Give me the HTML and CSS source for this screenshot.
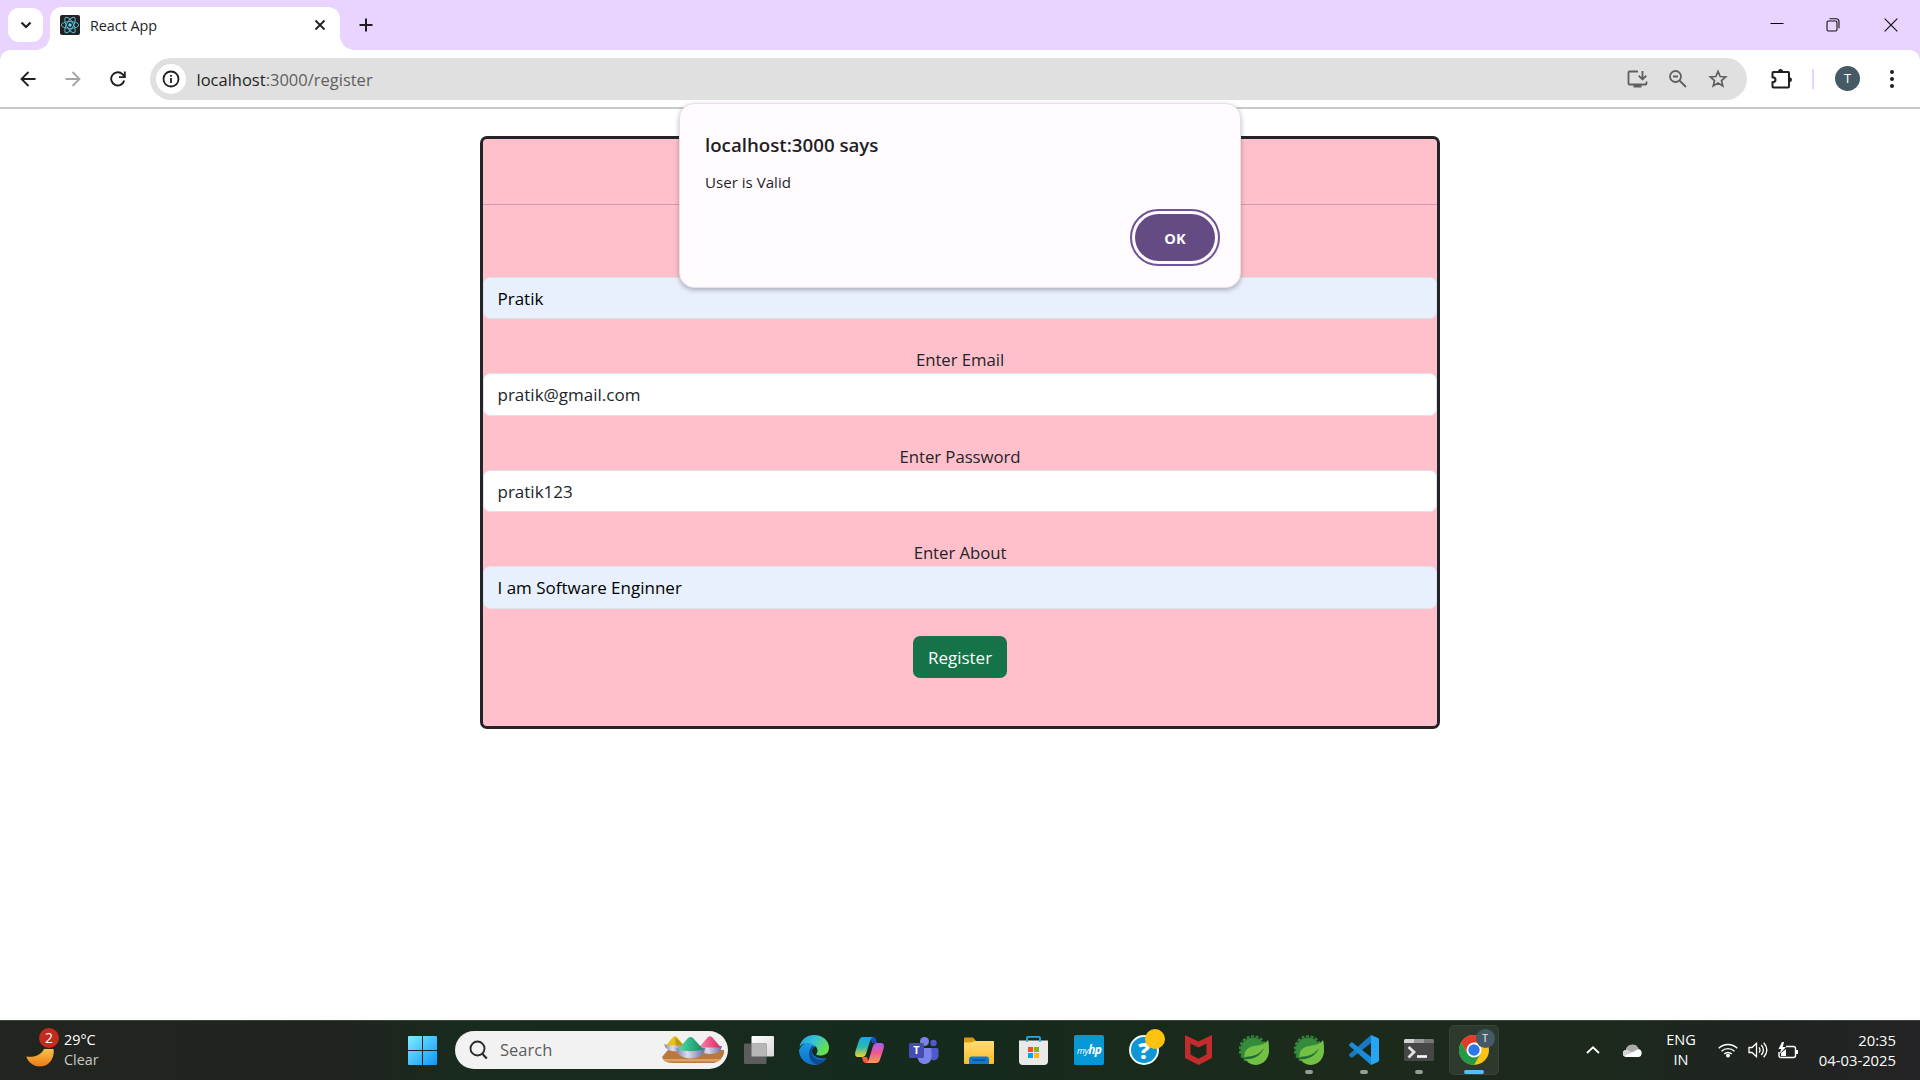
FILE: index.html
```html
<!DOCTYPE html>
<html lang="en">
<head>
<meta charset="utf-8">
<title>React App</title>
<link rel="stylesheet" href="styles.css">
</head>
<body>
<div class="screen">
  <header class="tabstrip">
    <div class="tab-search"><svg width="14" height="14" viewBox="0 0 14 14"><path d="M2.500 4.500 7 9l4.500-4.500" fill="none" stroke="#1f1f1f" stroke-width="2.200"/></svg></div>
    <div class="tab">
      <svg class="favicon" width="20" height="20" viewBox="0 0 20 20"><rect width="20" height="20" rx="2" fill="#222"/><g fill="none" stroke="#58b5cb" stroke-width="1"><ellipse cx="10" cy="10" rx="8.700" ry="3.400"/><ellipse cx="10" cy="10" rx="8.700" ry="3.400" transform="rotate(60 10 10)"/><ellipse cx="10" cy="10" rx="8.700" ry="3.400" transform="rotate(120 10 10)"/></g><circle cx="10" cy="10" r="1.700" fill="#61dafb"/></svg>
      <span class="tab-title">React App</span>
      <svg class="tab-close" width="12" height="12" viewBox="0 0 12 12"><path d="M1.500 1.500l9 9m0-9l-9 9" stroke="#1f1f1f" stroke-width="1.800"/></svg>
    </div>
    <svg class="new-tab" width="14" height="14" viewBox="0 0 14 14"><path d="M7 .5v13M.5 7h13" stroke="#1f1f1f" stroke-width="2"/></svg>
    <div class="window-controls">
      <svg width="14" height="14" viewBox="0 0 14 14"><path d="M.5 5.500h13" stroke="#000" stroke-width="1"/></svg>
      <svg width="14" height="14" viewBox="0 0 14 14"><rect x="1" y="3" width="10" height="10" rx="1.500" fill="none" stroke="#111" stroke-width="1.100"/><path d="M3.500 .8H10q3 0 3 3v6.500" fill="none" stroke="#111" stroke-width="1.100"/></svg>
      <svg width="14" height="14" viewBox="0 0 14 14"><path d="M.7 .7l12.600 12.600m0-12.600L.7 13.300" stroke="#111" stroke-width="1.200"/></svg>
    </div>
  </header>

  <div class="toolbar">
    <div class="nav-cell"><svg width="16" height="16" viewBox="0 0 16 16"><path d="M15.500 8H2M8.500 1 1.500 8l7 7" fill="none" stroke="#1f1f1f" stroke-width="1.800"/></svg></div>
    <div class="nav-cell"><svg width="16" height="16" viewBox="0 0 16 16"><path d="M.5 8H14M7.500 1l7 7-7 7" fill="none" stroke="#a5a5a5" stroke-width="1.800"/></svg></div>
    <div class="nav-cell"><svg width="16" height="16" viewBox="0 0 16 16"><path d="M14.200 9.500A6.600 6.600 0 1 1 12.600 3.300L14.300 5M14.800 .5v5.600H9" fill="none" stroke="#1f1f1f" stroke-width="1.900"/></svg></div>
    <div class="omnibox">
      <div class="site-info"><svg width="18" height="18" viewBox="0 0 18 18"><circle cx="9" cy="9" r="7.500" fill="none" stroke="#1f1f1f" stroke-width="1.800"/><path d="M9 8v5M9 5v1.800" stroke="#1f1f1f" stroke-width="1.800"/></svg></div>
      <span class="url"><b>localhost</b>:3000/register</span>
      <div class="omni-cell"><svg width="21" height="19" viewBox="0 0 21 19"><path d="M11 1.500H2.500q-1 0-1 1V13.500q0 1 1 1h16q1 0 1-1V11.500" fill="none" stroke="#5f5f5f" stroke-width="1.800"/><path d="M6.500 15h8v2.500h-8z" fill="#5f5f5f"/><path d="M15.500 1v8M11.700 5.600l3.800 3.800 3.800-3.800" fill="none" stroke="#5f5f5f" stroke-width="1.800"/></svg></div>
      <div class="omni-cell"><svg width="18" height="18" viewBox="0 0 18 18"><circle cx="6.500" cy="6.500" r="5.500" fill="none" stroke="#5f5f5f" stroke-width="1.800"/><path d="M4 6.500h5M10.500 10.500l6.500 6.500" stroke="#5f5f5f" stroke-width="1.800"/></svg></div>
      <div class="omni-cell"><svg width="20" height="20" viewBox="0 0 20 20"><path d="M10 2.400 12.200 7.500l5.500.5-4.200 3.600 1.300 5.400-4.800-2.900L5.200 17l1.300-5.400L2.300 8l5.500-.5z" fill="none" stroke="#5f5f5f" stroke-width="1.700"/></svg></div>
    </div>
    <svg class="extensions" width="22" height="22" viewBox="0 0 22 22"><path d="M3.500 4H18q1 0 1 1V18.500q0 1-1 1H3.500q-1 0-1-1v-4.300c4-.4 4-4.600 0-5V5q0-1 1-1z" fill="none" stroke="#1f1f1f" stroke-width="2"/><path d="M8 3.500a2.500 2.500 0 0 1 5 0zM19.500 9.200a2.500 2.500 0 0 1 0 5z" fill="#1f1f1f"/></svg>
    <span class="divider"></span>
    <span class="avatar">T</span>
    <svg class="menu" width="6" height="20" viewBox="0 0 6 20"><circle cx="3" cy="3" r="2" fill="#1f1f1f"/><circle cx="3" cy="10" r="2" fill="#1f1f1f"/><circle cx="3" cy="17" r="2" fill="#1f1f1f"/></svg>
  </div>

  <main class="page">
    <form class="card">
      <div class="card-head"></div>
      <div class="card-body">
        <div class="field"><div class="control autofill">Pratik</div></div>
        <div class="field"><label>Enter Email</label><div class="control">pratik@gmail.com</div></div>
        <div class="field"><label>Enter Password</label><div class="control">pratik123</div></div>
        <div class="field"><label>Enter About</label><div class="control autofill">I am Software Enginner</div></div>
        <button class="register" type="button">Register</button>
      </div>
    </form>
  </main>

  <div class="dialog">
    <h1>localhost:3000 says</h1>
    <p>User is Valid</p>
    <button class="ok" type="button">OK</button>
  </div>

  <footer class="taskbar">
    <div class="weather">
      <div class="moon">
        <svg width="30" height="20" viewBox="0 0 30 20"><defs><linearGradient id="moon" x1="0" y1="0" x2="0" y2="1"><stop offset="0" stop-color="#f6c445"/><stop offset="1" stop-color="#ee7a1a"/></linearGradient></defs><path d="M.3 7.500C9 9 16 5 18 0h9.500C29 8 24 17.500 14 17.500 7 17.500 2 13 .3 7.500z" fill="url(#moon)"/></svg>
        <span class="badge">2</span>
      </div>
      <div class="weather-text"><div>29°C</div><div class="dim">Clear</div></div>
    </div>
    <svg class="start" width="29" height="29" viewBox="0 0 29 29"><defs><linearGradient id="win" gradientUnits="userSpaceOnUse" x1="0" y1="0" x2="29" y2="29"><stop offset="0" stop-color="#7deeff"/><stop offset="1" stop-color="#0f95fb"/></linearGradient></defs><path d="M1 0h13v14H0V1q0-1 1-1zM15 0h13q1 0 1 1v13H15zM0 15h14v14H1q-1 0-1-1zM15 15h14v13q0 1-1 1H15z" fill="url(#win)"/></svg>
    <div class="search">
      <svg class="lens" width="19" height="20" viewBox="0 0 19 20"><circle cx="8.500" cy="8.500" r="7" fill="none" stroke="#2b2b2b" stroke-width="1.900"/><path d="M13.300 13.700l4.500 4.800" stroke="#2b2b2b" stroke-width="2.200"/></svg>
      <span>Search</span>
      <svg class="holi" width="64" height="30" viewBox="0 0 64 30"><defs><linearGradient id="bowl" x1="0" y1="0" x2="1" y2="0"><stop offset="0" stop-color="#8383b4"/><stop offset=".4" stop-color="#dcdcee"/><stop offset="1" stop-color="#6b6ba3"/></linearGradient><linearGradient id="grn" x1="0" y1="0" x2="1" y2="0"><stop offset="0" stop-color="#4fdda8"/><stop offset="1" stop-color="#138963"/></linearGradient><linearGradient id="pnk" x1="0" y1="0" x2="1" y2="0"><stop offset="0" stop-color="#ff83ac"/><stop offset="1" stop-color="#d8275f"/></linearGradient></defs>
        <path d="M7 15h56c1 6-4 11-10 13H12Q3 28 1 22z" fill="#b9793e"/><path d="M2 24h59l-4 2.500H4z" fill="#e0a263"/>
        <path d="M3 9.500h21q-1 7-9 7-10 0-12-7z" fill="url(#bowl)"/><path d="M5 10.500 12 2q2-1.500 4 0l7 8.500z" fill="#e5c11c"/><path d="M14 2l9 8.500h-8z" fill="#bb9710"/>
        <path d="M37 11h24q-1 8-12 8-10 0-12-8z" fill="url(#bowl)"/><path d="M38 12.500 47 2q2-1.500 4 0l9 10.500z" fill="url(#pnk)"/>
        <path d="M15 13h29q-1 10-14 10.500Q17 24 15 13z" fill="url(#bowl)"/><path d="M17 14.500 27 3q3-2 5 0l10.500 11.500Q30 18 17 14.500z" fill="url(#grn)"/></svg>
    </div>
    <nav class="apps">
      <div class="app"><svg width="30" height="28" viewBox="0 0 30 28"><defs><linearGradient id="tv" x1="0" y1="0" x2="1" y2="1"><stop offset="0" stop-color="#fff"/><stop offset="1" stop-color="#d8d8d8"/></linearGradient></defs><rect x="7.500" y="0" width="22.500" height="20.500" rx="1" fill="url(#tv)"/><rect x="0" y="7.500" width="22.500" height="20.500" rx="1" fill="#5d5d5d"/><path d="M7.500 7.500h15v13h-15z" fill="#b7b7b7"/></svg></div>
      <div class="app"><svg width="30" height="30" viewBox="0 0 30 30"><defs><linearGradient id="e1" x1="0" y1="0" x2="1" y2=".5"><stop offset="0" stop-color="#1e9ade"/><stop offset=".5" stop-color="#35c3d6"/><stop offset="1" stop-color="#68e04a"/></linearGradient><linearGradient id="e2" x1="0" y1="0" x2="0" y2="1"><stop offset="0" stop-color="#1b9de2"/><stop offset="1" stop-color="#0f6fca"/></linearGradient></defs><path d="M0 15a15 15 0 0 1 15-9l2 5c-3 1-4 3-4 5 0 5 6 8 14 7.500-2 4-7 6.500-12 6.500A15 15 0 0 1 0 15z" fill="url(#e2)"/><path d="M.5 12C2 4 8 0 15 0c9 0 15 6 15 12.500 0 6-4 8-9 8-3 0-4-1-3.500-2 2-2 1-6-2-8C11 7 4 7 .5 12z" fill="url(#e1)"/><path d="M13.500 11c-6 5-4 17 5 18.500 4-.5 7-3 9-6-5 3-15 .5-14.500-7.500 0-2 1-4 2.500-4.500z" fill="#0b4c96"/></svg></div>
      <div class="app"><svg width="29" height="26" viewBox="0 0 29 26"><defs><linearGradient id="c1" x1="0" y1="0" x2="0" y2="1"><stop offset="0" stop-color="#1aa7ee"/><stop offset=".5" stop-color="#2bb7b1"/><stop offset="1" stop-color="#f2d52a"/></linearGradient><linearGradient id="c2" x1="0" y1="0" x2="0" y2="1"><stop offset="0" stop-color="#a95cf5"/><stop offset=".5" stop-color="#f0588f"/><stop offset="1" stop-color="#ff9a4f"/></linearGradient></defs><path d="M15 0h3q2.500 0 3.300 3L22 6h-5z" fill="#194fc3"/><path d="M14 26h-3q-2.500 0-3.300-3L7 20h5z" fill="#f35a38"/><path d="M8 0h10q-2 .5-3 4l-4 13q-1 3-4 3H3Q-1 20 .5 14L4 3.500Q5 0 8 0z" fill="url(#c1)"/><path d="M21 26H11q2-.5 3-4l4-13q1-3 4-3h4q4 0 2.500 6L25 22.500Q24 26 21 26z" fill="url(#c2)"/></svg></div>
      <div class="app"><svg width="30" height="27" viewBox="0 0 30 27"><circle cx="24.500" cy="6" r="3.200" fill="#5059c9"/><path d="M20 11h8q1.500 0 1.500 1.500V18c0 7-9.500 7-9.500 0z" fill="#5059c9"/><circle cx="15.500" cy="4.500" r="4.500" fill="#7b83eb"/><path d="M8.500 11H21q1.500 0 1.500 1.500v7c0 10-14 10-14 0z" fill="#7b83eb"/><rect x="0" y="6" width="15" height="15" rx="1.500" fill="#444db3"/></svg><span class="teams-t">T</span></div>
      <div class="app"><svg width="30" height="27" viewBox="0 0 30 27"><path d="M0 1.500Q0 .5 1 .5h8l3 3.500v6H0z" fill="#dc9a0c"/><defs><linearGradient id="fold" x1="0" y1="0" x2="0" y2="1"><stop offset="0" stop-color="#ffdc75"/><stop offset="1" stop-color="#fbbd27"/></linearGradient></defs><path d="M0 5.500q8 0 11-1.500h18q1 0 1 1v21q0 1-1 1H1q-1 0-1-1z" fill="url(#fold)"/><path d="M5 27v-5q0-2.500 2.500-2.500h15q2.500 0 2.500 2.500v5z" fill="#0f7bd0"/><path d="M8.500 23h13" stroke="#0a4a85" stroke-width="1.300"/></svg></div>
      <div class="app store"><svg width="29" height="29" viewBox="0 0 29 29"><path d="M0 4.500h29V25q0 4-4 4H4q-4 0-4-4z" fill="#e9e9e9"/><path d="M8 6V1.900q0-1 1-1h11q1 0 1 1V6" fill="none" stroke="#28ace6" stroke-width="1.800"/><path d="M9 11h5v5H9z" fill="#f25022"/><path d="M15 11h5v5h-5z" fill="#7fba00"/><path d="M9 17h5v5H9z" fill="#00a4ef"/><path d="M15 17h5v5h-5z" fill="#ffb900"/></svg></div>
      <div class="app"><span class="myhp">my<b>hp</b></span></div>
      <div class="app"><span class="help">?</span><span class="dot"></span></div>
      <div class="app mcafee"><svg width="27" height="30" viewBox="0 0 27 30"><path d="M0 0l13.500 6.500L27 0v23l-13.500 7L0 23zM5.500 8.500v11l8 4.200 8-4.200v-11l-8 4z" fill="#c22c2e" fill-rule="evenodd"/></svg></div>
      <div class="app"><svg width="30" height="30" viewBox="0 0 30 30"><circle cx="14" cy="15" r="12.500" fill="#338b3b"/><circle cx="14" cy="14.500" r="13.200" fill="none" stroke="#338b3b" stroke-width="2" stroke-dasharray="3 1.600"/><path d="M29 5c-4 5-8 5-14 6C8 12 4 17 6 24c3 3 6 6 11 6 8-.5 13-7 13-14 0-4 0-8-1-11z" fill="#72c044"/><path d="M5 24C16 25 22 20 25 13c-5 7-10 8-18.500 9" fill="#206c35"/></svg></div>
      <div class="app running"><svg width="30" height="30" viewBox="0 0 30 30"><circle cx="14" cy="15" r="12.500" fill="#338b3b"/><circle cx="14" cy="14.500" r="13.200" fill="none" stroke="#338b3b" stroke-width="2" stroke-dasharray="3 1.600"/><path d="M29 5c-4 5-8 5-14 6C8 12 4 17 6 24c3 3 6 6 11 6 8-.5 13-7 13-14 0-4 0-8-1-11z" fill="#72c044"/><path d="M5 24C16 25 22 20 25 13c-5 7-10 8-18.500 9" fill="#206c35"/></svg></div>
      <div class="app running"><svg width="30" height="30" viewBox="0 0 30 30"><path d="M22 0v8L3.500 22.500Q2.500 23 1.500 22L.3 20.700q-.6-.9.200-1.700z" fill="#1b78c2"/><path d="M22 30v-8L3.500 7.500Q2.500 7 1.500 8L.3 9.300q-.6.900.2 1.700z" fill="#198bd9"/><path d="M22 0l7 3q1 .5 1 2v20q0 1.500-1 2l-7 3z" fill="#28a5f2"/></svg></div>
      <div class="app running"><svg width="30" height="22" viewBox="0 0 30 22"><rect width="30" height="22" rx="1.500" fill="#474747"/><path d="M1.500 0H10v4H0V1.500Q0 0 1.500 0z" fill="#d2d2d2"/><path d="M10 0h10v4H10z" fill="#9b9b9b"/><path d="M20 0h8.500Q30 0 30 1.500V4H20z" fill="#777"/><path d="M4.500 8l5.500 5-5.500 5.500" fill="none" stroke="#e2e2e2" stroke-width="2.800"/><path d="M13 17.500h10" stroke="#fff" stroke-width="2.600"/></svg></div>
      <div class="app active"><svg width="30" height="30" viewBox="0 0 30 30"><circle cx="15" cy="15" r="15" fill="#fbc116"/><path d="M2 7.500a15 15 0 0 1 26 0H15L8.500 18.800z" fill="#e33b2e"/><path d="M2 7.500A15 15 0 0 0 15 30l6.500-11.300L8.500 18.800z" fill="#229b48"/><circle cx="15" cy="15" r="7.500" fill="#fff"/><circle cx="15" cy="15" r="5.700" fill="#2d78e8"/></svg><span class="profile">T</span></div>
    </nav>
    <div class="tray">
      <svg class="caret" width="14" height="8" viewBox="0 0 14 8"><path d="M1 7l6-5.700L13 7" fill="none" stroke="#fff" stroke-width="1.800"/></svg>
      <svg class="cloud" width="20" height="13" viewBox="0 0 20 13"><path d="M3.500 13a3.500 3.500 0 0 1-.5-7A6.500 6.500 0 0 1 15.500 5 4.200 4.200 0 0 1 16 13z" fill="#fff"/><path d="M3 6A6.500 6.500 0 0 1 15.500 5L9 8.500z" fill="#aaa"/><path d="M9 8.500 4 6C0 6-1 10 1 12z" fill="#d2d2d2"/></svg>
      <div class="lang"><div>ENG</div><div>IN</div></div>
      <svg class="wifi" width="20" height="16" viewBox="0 0 20 16"><g fill="none" stroke="#fff" stroke-width="1.400"><path d="M.7 6.300a13.200 13.200 0 0 1 18.600 0M3.500 9.300a9.200 9.200 0 0 1 13 0M6.200 12a5.400 5.400 0 0 1 7.600 0"/></g><circle cx="10" cy="13.500" r="2" fill="#fff"/></svg>
      <svg class="sound" width="20" height="16" viewBox="0 0 20 16"><path d="M1 5.500h3L8.500 1.300v13.400L4 10.500H1z" fill="none" stroke="#fff" stroke-width="1.300"/><path d="M11 5.300q2 2.700 0 5.400M13.300 3q4.200 5 0 10M15.700.8q6.300 7.200 0 14.400" fill="none" stroke="#fff" stroke-width="1.300"/></svg>
      <svg class="battery" width="20" height="17" viewBox="0 0 20 17"><path d="M8 4.500h7.500q2 0 2 2v7q0 2-2 2H3q-2 0-2-2V10" fill="none" stroke="#fff" stroke-width="1.400"/><path d="M18 8h2v4h-2zM3 11l5-4v7H3z" fill="#fff"/><path d="M4 0 .5 7h2.800L1.500 12 8 5H4.800L6 0z" fill="#fff"/></svg>
      <div class="clock"><div>20:35</div><div>04-03-2025</div></div>
    </div>
  </footer>
</div>
</body>
</html>
```

FILE: styles.css
```css
* { box-sizing: border-box; }
body { margin: 0; font-family: "Open Sans", "Noto Sans", sans-serif; color: #212529; }
svg { display: block; flex: none; }
button { font-family: inherit; border: 0; padding: 0; }
.screen { position: relative; width: 1920px; height: 1080px; display: flex; flex-direction: column; overflow: hidden; background: #fff; }

.tabstrip { flex: none; height: 50px; display: flex; background: #e8d4ff; }
.tab-search { width: 35px; height: 34px; margin: 8px 7px 0 8px; border-radius: 11px; background: #fff; display: flex; align-items: center; justify-content: center; }
.tab { position: relative; width: 290px; height: 43px; margin-top: 7px; padding: 0 14px 7px 10px; border-radius: 12px 12px 0 0; background: #fff; display: flex; align-items: center; }
.tab::before, .tab::after { content: ""; position: absolute; bottom: 0; width: 14px; height: 14px; }
.tab::before { left: -14px; background: radial-gradient(circle at 0 0, transparent 13.5px, #fff 14px); }
.tab::after { right: -14px; background: radial-gradient(circle at 100% 0, transparent 13.5px, #fff 14px); }
.tab-title { margin-left: 10px; padding-top: 1px; flex: 1; font-size: 14.4px; letter-spacing: -0.05px; line-height: 20px; color: #1f1f1f; }
.new-tab { margin: 18px 0 0 19px; }
.window-controls { margin-left: auto; padding: 18px 22px 0 0; display: flex; gap: 44px; }
.window-controls svg:first-child { margin-right: -2px; }

.toolbar { position: relative; flex: none; height: 59px; padding: 0 25px 0 5px; border-bottom: 2px solid #c9c9c9; background: #fff; display: flex; align-items: center; }
.toolbar::before, .toolbar::after { content: ""; position: absolute; top: 0; width: 10px; height: 10px; }
.toolbar::before { left: 0; background: radial-gradient(circle at 100% 100%, transparent 9.5px, #e8d4ff 10px); }
.toolbar::after { right: 0; background: radial-gradient(circle at 0 100%, transparent 9.5px, #e8d4ff 10px); }
.nav-cell { width: 45px; display: flex; justify-content: center; }
.omnibox { width: 1597px; height: 42px; margin: 1px 0 0 10px; padding: 0 9.5px 0 6px; border-radius: 21px; background: #e0e0e0; display: flex; align-items: center; }
.site-info { width: 30px; height: 30px; border-radius: 50%; background: #fff; display: flex; align-items: center; justify-content: center; }
.url { margin-left: 10.5px; padding-top: 1px; flex: 1; font-size: 16.5px; line-height: 24px; color: #5f5f5f; }
.url b { font-weight: 400; color: #1f1f1f; }
.omni-cell { width: 40px; display: flex; justify-content: center; }
.extensions { margin-left: 23px; }
.divider { width: 2px; height: 20px; margin-left: 20px; background: #e8d4ff; }
.avatar { width: 25px; height: 25px; margin-left: 21px; border-radius: 50%; background: #455a64; color: #fff; font-size: 13px; line-height: 25px; text-align: center; }
.menu { margin-left: 29px; }

.page { flex: 1; padding-top: 27px; }
.card { width: 960px; height: 593px; margin: 0 auto; border: 3px solid #212529; border-radius: 7px; background: #ffc0cb; overflow: hidden; }
.card-head { height: 66px; border-bottom: 1px solid #cf9ba6; }
.card-body { padding-top: 72px; display: flex; flex-direction: column; align-items: center; }
.field { width: 100%; margin-bottom: 27.2px; text-align: center; }
.field label { display: block; height: 27px; font-size: 16.8px; letter-spacing: -0.07px; line-height: 27px; }
.control { height: 42.3px; padding: 1px 13.5px 0; border: 1px solid #dee2e6; border-radius: 7px; background: #fff; font-size: 17px; line-height: 40px; text-align: left; }
.autofill { background: #e8f0fe; color: #000; }
.register { width: 94px; height: 42px; padding-top: 1px; border-radius: 7px; background: #157347; color: #fff; font-size: 17px; line-height: 41px; }

.dialog { position: absolute; left: 679px; top: 103px; width: 562px; height: 185px; padding: 26px 25px 26px; border: 1px solid #e8dfea; border-radius: 15px; background: #fffbff; box-shadow: 0 2px 5px rgba(0,0,0,.28); display: flex; flex-direction: column; }
.dialog h1 { margin: 0; font-size: 18.7px; line-height: 30px; font-weight: 600; color: #1f1f1f; }
.dialog p { margin: 12px 0 0; font-size: 15.1px; line-height: 20px; color: #1f1f1f; }
.ok { align-self: flex-end; width: 80px; height: 47px; margin-top: 22px; border-radius: 24px; background: #654b84; color: #fff; font-size: 14.6px; font-weight: 700; outline: 2px solid #6f539b; outline-offset: 3px; }

.taskbar { flex: none; height: 60px; padding-bottom: 1px; border-top: 1px solid #3c443e; background: linear-gradient(90deg, #22241f 0, #20241f 340px, #192a1e 450px, #152a1d 950px, #1b2a1b 1300px, #1c291d 1600px, #1f2420 1750px, #242325 1920px); display: flex; align-items: center; color: #fff; }
.weather { width: 408px; padding-left: 26px; display: flex; align-items: center; }
.moon { position: relative; height: 34px; padding-top: 16px; }
.badge { position: absolute; left: 13px; top: -5px; width: 20px; height: 20px; border-radius: 50%; background: #c42b1c; font-size: 14px; line-height: 20px; text-align: center; }
.weather-text { margin: -1px 0 0 8px; font-size: 14.4px; line-height: 20px; }
.dim { color: #c7c9c6; }
.search { width: 273px; height: 38px; margin: 0 3.5px 0 18px; padding: 0 3px 0 14px; border-radius: 19px; background: #f2f2f2; display: flex; align-items: center; }
.search span { margin-left: 12px; flex: 1; font-size: 16.5px; line-height: 24px; color: #5c5c5c; }
.apps { display: flex; }
.app { position: relative; width: 55px; height: 50px; display: flex; align-items: center; justify-content: center; }
.app.store, .app.mcafee { padding-right: 1px; }
.app.active::before { content: ""; position: absolute; inset: 0 2.5px; border: 1px solid #384439; border-radius: 5px; background: rgba(255,255,255,.08); }
.app.active svg { position: relative; }
.app.running::after, .app.active::after { content: ""; position: absolute; bottom: 1px; width: 8px; height: 4px; border-radius: 2px; background: #939b94; }
.app.active::after { width: 20px; background: #4cc2ff; }
.teams-t { position: absolute; left: 12px; top: 17px; width: 16px; font-size: 11px; line-height: 15px; font-weight: 700; text-align: center; }
.myhp { width: 30px; height: 30px; border-radius: 2px; background: #0796d6; font-size: 9px; line-height: 29px; text-align: center; font-style: italic; letter-spacing: -0.3px; }
.myhp b { font-size: 12px; letter-spacing: -0.8px; }
.help { width: 30px; height: 30px; border: 2px solid #f1f8fb; border-radius: 50%; background: #0e96d4; font-size: 23px; line-height: 26px; font-weight: 800; text-align: center; }
.dot { position: absolute; left: 28px; top: 4px; width: 20px; height: 20px; border-radius: 50%; background: #ffc20e; }
.profile { position: absolute; left: 29px; top: 4px; width: 19px; height: 19px; border-radius: 50%; background: #455a64; color: #cfd6d9; font-size: 10px; line-height: 19px; font-weight: 600; text-align: center; }
.tray { margin-left: auto; padding-right: 24px; display: flex; align-items: center; font-size: 14.5px; line-height: 20px; }
.cloud { margin: 0 23px 0 23px; }
.lang { width: 30px; text-align: center; margin-right: 22px; white-space: nowrap; }
.sound { margin: 0 10px; }
.clock { width: 98px; text-align: right; white-space: nowrap; font-size: 14.8px; }
```
